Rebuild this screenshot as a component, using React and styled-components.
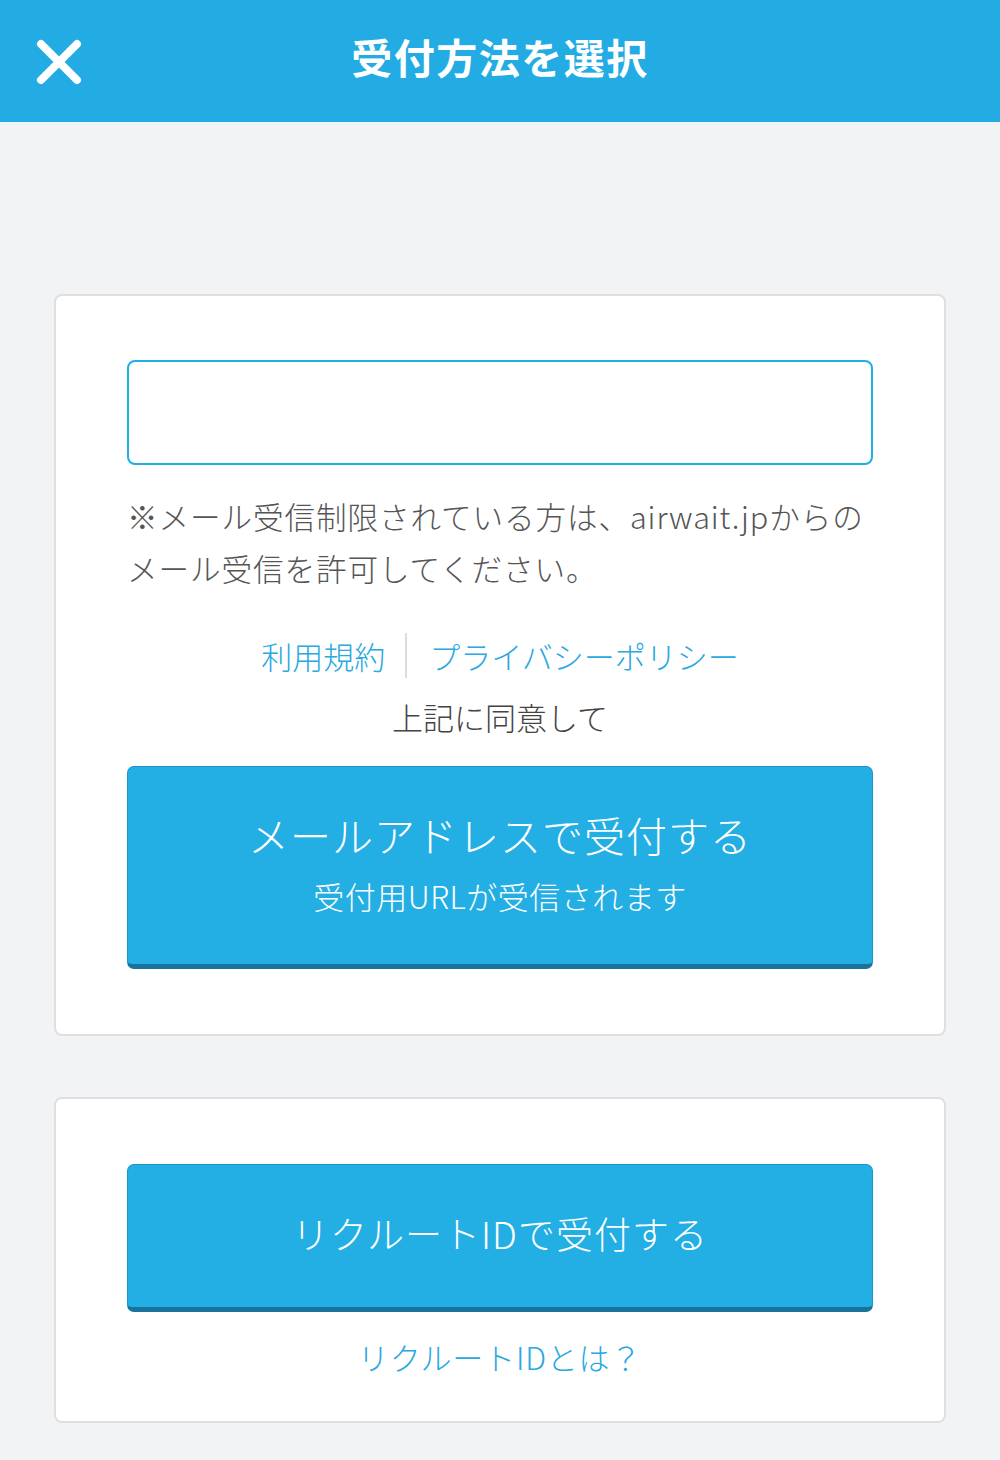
import React, { useState } from 'react';
import styled, { createGlobalStyle } from 'styled-components';

const GlobalStyle = createGlobalStyle`
  html, body {
    margin: 0;
    padding: 0;
    background: #f2f3f5;
  }
  body {
    font-family: "Noto Sans CJK JP", "Noto Sans", sans-serif;
    color: #555;
  }
`;

const Page = styled.div`
  min-height: 1460px;
  background: #f2f3f5;
`;

const Header = styled.header`
  position: relative;
  height: 122px;
  background: #22ace3;
  display: flex;
  align-items: center;
  justify-content: center;
`;

const CloseButton = styled.button`
  position: absolute;
  left: 32px;
  top: 35px;
  width: 54px;
  height: 54px;
  padding: 0;
  border: none;
  background: transparent;
  cursor: pointer;
  display: flex;
  align-items: center;
  justify-content: center;
`;

const Title = styled.h1`
  margin: 0 0 10px;
  color: #fff;
  font-size: 41px;
  font-weight: 700;
  letter-spacing: 1.5px;
`;

const Content = styled.main`
  display: flex;
  flex-direction: column;
  gap: 61px;
  padding: 172px 54px 40px;
`;

const Card = styled.section`
  background: #fff;
  border: 2px solid #dfdfe1;
  border-radius: 8px;
  padding: ${props => props.$pad || '64px 71px 65px'};
  display: flex;
  flex-direction: column;
  align-items: stretch;
`;

const EmailInput = styled.input`
  box-sizing: border-box;
  width: 100%;
  height: 105px;
  border: 2px solid #1faee6;
  border-radius: 8px;
  padding: 0 24px;
  font-size: 30px;
  font-family: inherit;
  outline: none;
`;

const Note = styled.p`
  margin: 25px 0 0;
  font-size: 30.6px;
  line-height: 52px;
  font-weight: 300;
  letter-spacing: 0.9px;
  white-space: nowrap;
  color: #555;
`;

const LinkRow = styled.div`
  display: flex;
  justify-content: center;
  align-items: center;
  margin-top: 39px;
`;

const TextLink = styled.a`
  color: #2aa8e0;
  font-size: 31px;
  font-weight: 300;
  line-height: 45px;
  text-decoration: none;
  cursor: pointer;
`;

const Divider = styled.span`
  width: 2px;
  height: 45px;
  background: #dcdcdc;
  margin: 0 22px 0 20px;
`;

const Agree = styled.p`
  margin: 15px 0 25px;
  text-align: center;
  font-size: 31px;
  font-weight: 300;
  line-height: 48px;
  color: #444;
`;

const ActionButton = styled.button`
  box-sizing: border-box;
  width: 100%;
  height: ${props => props.$height}px;
  padding: 0 0 6px;
  border: 1px solid #1d95c6;
  border-bottom: 5px solid #19739d;
  border-radius: 7px;
  background: #23aee4;
  color: #fff;
  font-family: inherit;
  display: flex;
  flex-direction: column;
  align-items: center;
  justify-content: center;
  cursor: pointer;
`;

const ButtonMain = styled.span`
  font-size: ${props => props.$size}px;
  font-weight: 300;
  line-height: 52px;
  letter-spacing: 1px;
`;

const ButtonSub = styled.span`
  margin-top: 14px;
  font-size: 31px;
  font-weight: 300;
  line-height: 44px;
  letter-spacing: 0.5px;
`;

const HelpLink = styled(TextLink)`
  align-self: center;
  margin: 21px 0 2px;
  line-height: 48px;
  letter-spacing: 0.8px;
`;

const CloseIcon = () => (
  <svg width="50" height="50" viewBox="0 0 50 50">
    <path
      d="M7 7 L43 43 M43 7 L7 43"
      stroke="#fff"
      strokeWidth="8"
      strokeLinecap="round"
      fill="none"
    />
  </svg>
);

const App = () => {
  const [email, setEmail] = useState('');

  return (
    <Page>
      <GlobalStyle />
      <Header>
        <CloseButton aria-label="閉じる">
          <CloseIcon />
        </CloseButton>
        <Title>受付方法を選択</Title>
      </Header>

      <Content>
        <Card>
          <EmailInput
            type="email"
            value={email}
            onChange={e => setEmail(e.target.value)}
          />
          <Note>
            ※メール受信制限されている方は、airwait.jpからの
            <br />
            メール受信を許可してください。
          </Note>
          <LinkRow>
            <TextLink>利用規約</TextLink>
            <Divider />
            <TextLink>プライバシーポリシー</TextLink>
          </LinkRow>
          <Agree>上記に同意して</Agree>
          <ActionButton $height={203}>
            <ButtonMain $size={41}>メールアドレスで受付する</ButtonMain>
            <ButtonSub>受付用URLが受信されます</ButtonSub>
          </ActionButton>
        </Card>

        <Card $pad="65px 71px 38px">
          <ActionButton $height={148}>
            <ButtonMain $size={37}>リクルートIDで受付する</ButtonMain>
          </ActionButton>
          <HelpLink>リクルートIDとは？</HelpLink>
        </Card>
      </Content>
    </Page>
  );
};

export default App;
